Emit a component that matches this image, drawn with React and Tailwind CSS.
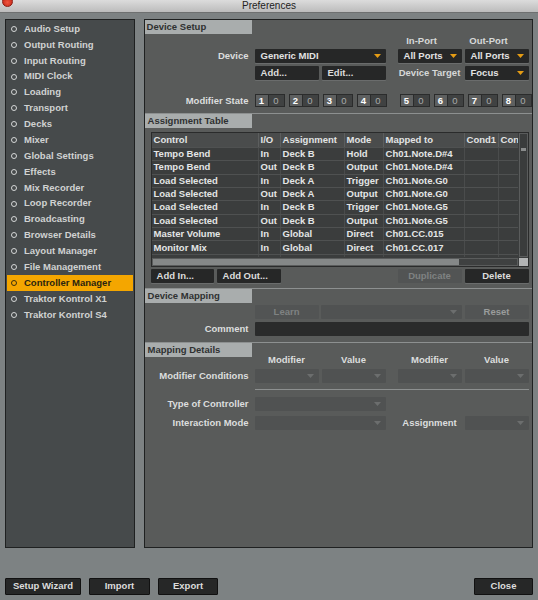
import React from "react";

const sideItems = [
  "Audio Setup", "Output Routing", "Input Routing", "MIDI Clock", "Loading", "Transport", "Decks", "Mixer",
  "Global Settings", "Effects", "Mix Recorder", "Loop Recorder", "Broadcasting", "Browser Details",
  "Layout Manager", "File Management", "Controller Manager", "Traktor Kontrol X1", "Traktor Kontrol S4",
];

const rows = [
  ["Tempo Bend", "In", "Deck B", "Hold", "Ch01.Note.D#4"],
  ["Tempo Bend", "Out", "Deck B", "Output", "Ch01.Note.D#4"],
  ["Load Selected", "In", "Deck A", "Trigger", "Ch01.Note.G0"],
  ["Load Selected", "Out", "Deck A", "Output", "Ch01.Note.G0"],
  ["Load Selected", "In", "Deck B", "Trigger", "Ch01.Note.G5"],
  ["Load Selected", "Out", "Deck B", "Output", "Ch01.Note.G5"],
  ["Master Volume", "In", "Global", "Direct", "Ch01.CC.015"],
  ["Monitor Mix", "In", "Global", "Direct", "Ch01.CC.017"],
  ["Monitor Volume", "In", "Global", "Direct", "Ch01.CC.016"],
];

const cols = "grid grid-cols-[107px_22px_64px_39px_81px_34px_21px]";

function Arrow({ disabled }) {
  return (
    <svg width="7" height="4" viewBox="0 0 7 4" className="mr-[5px] shrink-0">
      <path d="M0 0 L7 0 L3.5 4 Z" fill={disabled ? "#6c6e6e" : "#e49c14"} />
    </svg>
  );
}

function Drop({ label, disabled, className = "" }) {
  return (
    <div className={`flex items-center h-[14px] rounded-[1px] ${disabled ? "bg-[#505252]" : "bg-[#262727] shadow-[0_1px_0_#6a6c6c]"} ${className}`}>
      <span className="flex-1 pl-[6px] text-[#e2e2e2] truncate">{label}</span>
      <Arrow disabled={disabled} />
    </div>
  );
}

function Btn({ children, disabled, center, className = "" }) {
  return (
    <div className={`flex items-center h-[14px] rounded-[1px] ${center ? "justify-center" : "pl-[6px]"} ${disabled ? "bg-[#525454] text-[#7f8282]" : "bg-[#262727] text-[#dcdcdc] shadow-[0_1px_0_#6a6c6c]"} ${className}`}>
      {children}
    </div>
  );
}

function Header({ title }) {
  return (
    <div className="flex border-t border-[#8d9090]">
      <div className="w-[107px] h-[14px] bg-[#a9adad] text-[#2f3131] pl-[3px] flex items-center">{title}</div>
    </div>
  );
}

function Pair({ n }) {
  return (
    <div className="flex w-[30px] h-[13px] border border-[#2b2c2c] bg-[#2b2c2c] gap-px">
      <div className="w-[12px] bg-[#5e6060] text-white flex items-center justify-center">{n}</div>
      <div className="flex-1 bg-[#404242] text-[#a9abab] font-normal flex items-center justify-center">0</div>
    </div>
  );
}

export default function App() {
  return (
    <div className="w-[538px] h-[600px] bg-[#7d8283] flex flex-col overflow-hidden font-['Liberation_Sans',Arial,sans-serif] text-[9.5px] font-bold">
      {/* title bar */}
      <div className="relative h-[13px] bg-gradient-to-b from-[#dcdcdc] to-[#bcbcbc] border-b border-[#6e7070] flex items-center justify-center">
        <div className="absolute left-[2px] top-[-4px] w-[11px] h-[11px] rounded-full bg-[radial-gradient(circle_at_50%_60%,#f2553f,#b81d10)] border border-[#8a1a10]" />
        <span className="text-[10px] leading-none font-normal text-[#222]">Preferences</span>
      </div>

      <div className="flex px-[5px] pt-[6px] gap-[9px]">
        {/* sidebar */}
        <div className="w-[130px] h-[529px] bg-[#464a4b] border border-[#1f2121] pt-[1px] px-px">
          {sideItems.map((s) => {
            const active = s === "Controller Manager";
            return (
              <div key={s} className={`flex items-center h-[15.875px] ${active ? "bg-[#f4a600] text-[#2a2410]" : "text-[#d0d2d2]"}`}>
                <span className={`ml-[4px] w-[6px] h-[6px] rounded-full border-[1.5px] ${active ? "border-[#3a3010]" : "border-[#d4d6d6]"}`} />
                <span className="ml-[7px]">{s}</span>
              </div>
            );
          })}
        </div>

        {/* main panel */}
        <div className="w-[391px] h-[529px] bg-[#595b5a] border border-[#1f2121] text-[#dcdede]">
          <div className="flex">
            <div className="w-[107px] h-[14px] bg-[#a9adad] text-[#2f3131] pl-[2px] flex items-center">Device Setup</div>
          </div>

          {/* device setup */}
          <div className="flex mt-[2px] h-[11px] items-center">
            <div className="w-[245px]" />
            <div className="w-[64px] text-center text-[#d6d8d8]">In-Port</div>
            <div className="w-[64px] ml-[3px] text-center text-[#d6d8d8]">Out-Port</div>
          </div>
          <div className="flex items-center mt-[2px]">
            <div className="w-[104px] text-right">Device</div>
            <Drop label="Generic MIDI" className="ml-[6px] w-[131px]" />
            <Drop label="All Ports" className="ml-[12px] w-[64px]" />
            <Drop label="All Ports" className="ml-[3px] w-[64px]" />
          </div>
          <div className="flex items-center mt-[3px]">
            <Btn className="ml-[110px] w-[64px]">Add...</Btn>
            <Btn className="ml-[3px] w-[64px]">Edit...</Btn>
            <div className="ml-[12px] w-[64px] text-center text-[#d6d8d8]">Device Target</div>
            <Drop label="Focus" className="ml-[3px] w-[64px]" />
          </div>
          <div className="flex items-center mt-[13px]">
            <div className="w-[104px] text-right">Modifier State</div>
            <div className="ml-[6px] flex gap-[4px]">
              <Pair n="1" /><Pair n="2" /><Pair n="3" /><Pair n="4" />
            </div>
            <div className="ml-[13px] flex gap-[4px]">
              <Pair n="5" /><Pair n="6" /><Pair n="7" /><Pair n="8" />
            </div>
          </div>

          {/* assignment table */}
          <div className="mt-[5px]">
            <Header title="Assignment Table" />
          </div>
          <div className="ml-[6px] mt-[4px] w-[378px] h-[135px] border border-[#2a2b2b] flex flex-col bg-[#3b3d3d]">
            <div className="flex h-[124px]">
              <div className="w-[368px] overflow-hidden">
                <div className={`${cols} h-[14px] bg-[#4a4c4c] text-[#e2e4e4] items-center`}>
                  {["Control", "I/O", "Assignment", "Mode", "Mapped to", "Cond1", "Con"].map((h) => (
                    <div key={h} className="pl-[2px] h-full flex items-center border-r border-[#5c5e5e] whitespace-nowrap overflow-hidden">{h}</div>
                  ))}
                </div>
                {rows.map((r, i) => (
                  <div key={i} className={`${cols} h-[13.4px] border-t border-[#4f5151] text-[#e4e6e6]`}>
                    {[...r, "", ""].map((c, j) => (
                      <div key={j} className="pl-[2px] flex items-center border-r border-[#4a4c4c] whitespace-nowrap overflow-hidden">{c}</div>
                    ))}
                  </div>
                ))}
              </div>
              <div className="w-[9px] ml-px border border-[#5a5c5c] bg-[#3a3c3c] relative">
                <div className="absolute left-[1px] top-[14px] w-[5px] h-[3px] bg-[#8a8c8c]" />
              </div>
            </div>
            <div className="flex h-[10px] mt-px">
              <div className="w-[367px] border border-[#5a5c5c] bg-[#3f4141] flex">
                <div className="w-[306px] bg-[#858888]" />
              </div>
              <div className="w-[9px] ml-px bg-[#b2b4b4]" />
            </div>
          </div>

          <div className="flex items-center mt-[2px] ml-[6px]">
            <Btn className="w-[63px]">Add In...</Btn>
            <Btn className="ml-[3px] w-[64px]">Add Out...</Btn>
            <Btn disabled center className="ml-[117px] w-[64px]">Duplicate</Btn>
            <Btn center className="ml-[3px] w-[64px]">Delete</Btn>
          </div>

          {/* device mapping */}
          <div className="mt-[5px]">
            <Header title="Device Mapping" />
          </div>
          <div className="flex items-center mt-[2px]">
            <Btn disabled center className="ml-[110px] w-[64px]">Learn</Btn>
            <Drop disabled label="" className="ml-[2px] w-[141px]" />
            <Btn disabled center className="ml-[3px] w-[64px] !text-[#9a9c9c]">Reset</Btn>
          </div>
          <div className="flex items-center mt-[3px]">
            <div className="w-[104px] text-right">Comment</div>
            <div className="ml-[6px] w-[274px] h-[14px] bg-[#2a2b2b] rounded-[1px]" />
          </div>

          {/* mapping details */}
          <div className="mt-[6px]">
            <Header title="Mapping Details" />
          </div>
          <div className="flex h-[10px] items-end">
            <div className="ml-[110px] w-[64px] text-center">Modifier</div>
            <div className="ml-[3px] w-[64px] text-center">Value</div>
            <div className="ml-[12px] w-[64px] text-center">Modifier</div>
            <div className="ml-[3px] w-[64px] text-center">Value</div>
          </div>
          <div className="flex items-center mt-[2px]">
            <div className="w-[104px] text-right">Modifier Conditions</div>
            <Drop disabled label="" className="ml-[6px] w-[64px]" />
            <Drop disabled label="" className="ml-[3px] w-[64px]" />
            <Drop disabled label="" className="ml-[12px] w-[64px]" />
            <Drop disabled label="" className="ml-[3px] w-[64px]" />
          </div>
          <div className="ml-[110px] w-[274px] mt-[6px] border-t border-[#8d9090]" />
          <div className="flex items-center mt-[7px]">
            <div className="w-[104px] text-right">Type of Controller</div>
            <Drop disabled label="" className="ml-[6px] w-[131px]" />
          </div>
          <div className="flex items-center mt-[4px]">
            <div className="w-[104px] text-right">Interaction Mode</div>
            <Drop disabled label="" className="ml-[6px] w-[131px]" />
            <div className="ml-[12px] w-[64px] text-center">Assignment</div>
            <Drop disabled label="" className="ml-[3px] w-[64px]" />
          </div>
        </div>
      </div>

      {/* bottom buttons */}
      <div className="flex items-center px-[5px] mt-[30px] text-[#dcdcdc]">
        <div className="w-[76px] h-[17px] bg-[#262727] border border-[#111] rounded-[1px] flex items-center justify-center">Setup Wizard</div>
        <div className="ml-[8px] w-[61px] h-[17px] bg-[#262727] border border-[#111] rounded-[1px] flex items-center justify-center">Import</div>
        <div className="ml-[8px] w-[60px] h-[17px] bg-[#262727] border border-[#111] rounded-[1px] flex items-center justify-center">Export</div>
        <div className="ml-auto w-[59px] h-[17px] bg-[#262727] border border-[#111] rounded-[1px] flex items-center justify-center">Close</div>
      </div>
    </div>
  );
}
